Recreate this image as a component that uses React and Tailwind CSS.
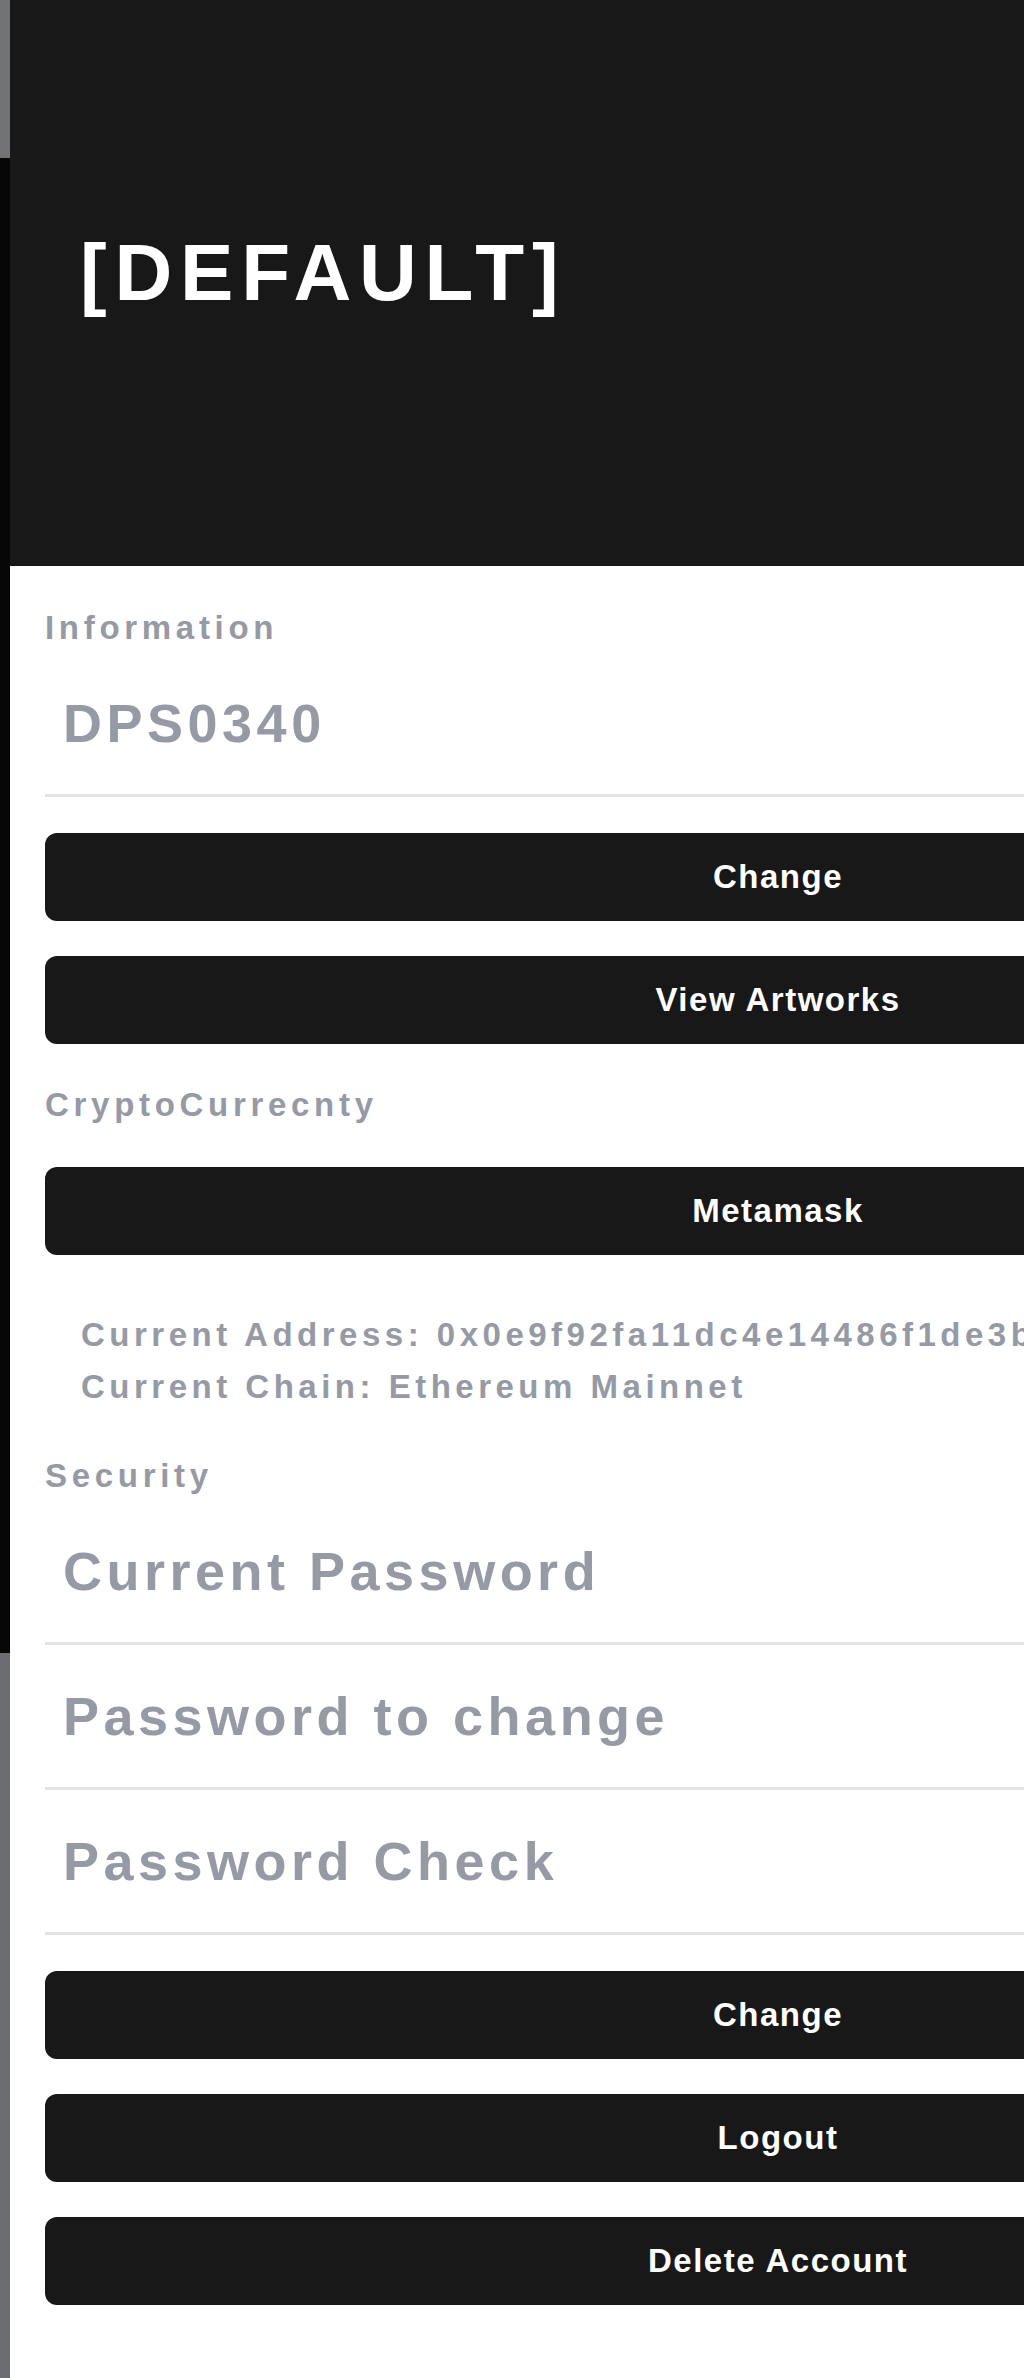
import React from "react";

const font = { fontFamily: '"Liberation Sans", Arial, sans-serif' };

function Label({ children, className = "" }) {
  return (
    <div className={`text-[33px] leading-none font-bold tracking-[4.7px] text-[#959aa5] whitespace-nowrap ${className}`}>
      {children}
    </div>
  );
}

function Input({ children, className = "" }) {
  return (
    <div className={`h-[145px] border-b-[3px] border-[#e2e3e8] flex items-center pl-[18px] ${className}`}>
      <span className="text-[54px] leading-none font-bold tracking-[4.5px] text-[#959aa5] whitespace-nowrap">
        {children}
      </span>
    </div>
  );
}

function Button({ children, className = "" }) {
  return (
    <button
      type="button"
      className={`w-full h-[88px] rounded-[12px] bg-[#181818] text-white text-[33px] font-bold tracking-[1.5px] flex items-center justify-center ${className}`}
      style={font}
    >
      {children}
    </button>
  );
}

export default function App() {
  return (
    <div className="w-[1024px] min-h-[2378px] overflow-hidden flex bg-white" style={font}>
      <div className="w-[10px] shrink-0 flex flex-col">
        <div className="h-[158px] bg-[#717274]" />
        <div className="h-[1495px] bg-[#060606]" />
        <div className="flex-1 bg-[#6c6d70]" />
      </div>
      <div className="flex-1 flex flex-col min-w-0">
        <header className="h-[566px] bg-[#181818] pl-[70px] pt-[233px] shrink-0">
          <h1 className="text-[80px] leading-none font-bold tracking-[7.8px] text-white whitespace-nowrap">
            [DEFAULT]
          </h1>
        </header>
        <main className="pl-[35px]">
          <div className="w-[1466px] flex flex-col pb-[72px]">
            <Label className="mt-[45px]">Information</Label>
            <Input className="mt-[8px]">DPS0340</Input>
            <Button className="mt-[36px]">Change</Button>
            <Button className="mt-[35px]">View Artworks</Button>

            <Label className="mt-[44px]">CryptoCurrecnty</Label>
            <Button className="mt-[46px]">Metamask</Button>

            <div className="mt-[54px] pl-[36px] text-[33px] leading-[52px] font-bold tracking-[4.5px] text-[#959aa5] whitespace-nowrap">
              <div>Current Address: 0x0e9f92fa11dc4e14486f1de3b5a2c7e90d4f8a21</div>
              <div>Current Chain: Ethereum Mainnet</div>
            </div>

            <Label className="mt-[46px]">Security</Label>
            <Input className="mt-[8px]">Current Password</Input>
            <Input>Password to change</Input>
            <Input>Password Check</Input>

            <Button className="mt-[36px]">Change</Button>
            <Button className="mt-[35px]">Logout</Button>
            <Button className="mt-[35px]">Delete Account</Button>
          </div>
        </main>
      </div>
    </div>
  );
}
